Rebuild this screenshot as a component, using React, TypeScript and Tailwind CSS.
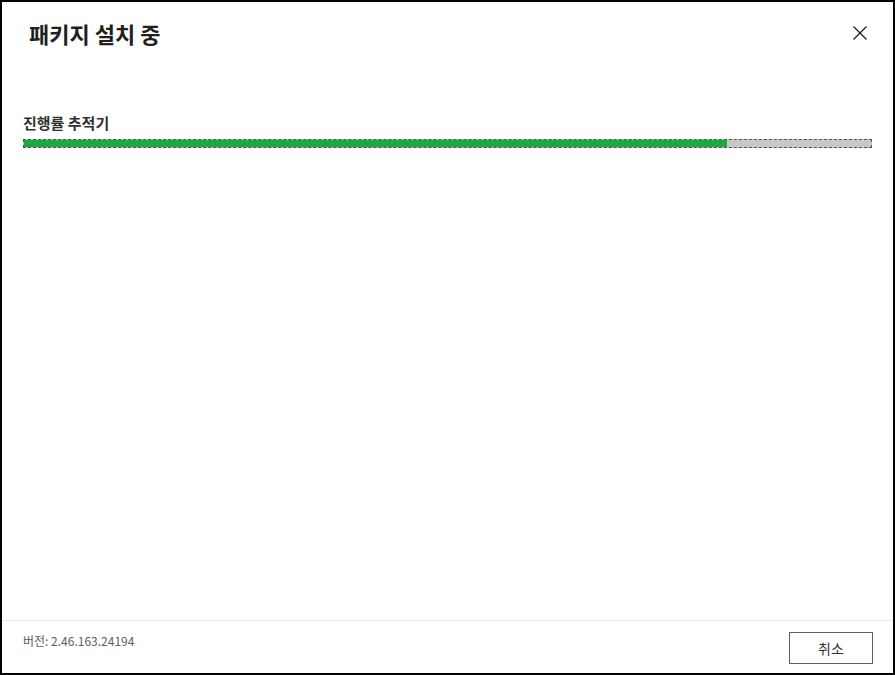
const font = { fontFamily: '"Noto Sans CJK KR", "Noto Sans", sans-serif' };

function CloseIcon() {
  return (
    <svg width="14" height="14" viewBox="0 0 14 14" fill="none">
      <path d="M0.5 0.5l13 13M13.5 0.5l-13 13" stroke="currentColor" strokeWidth="1.3" />
    </svg>
  );
}

export default function App() {
  const progress = 83;

  return (
    <div
      className="flex h-[675px] w-[895px] flex-col border-2 border-black bg-white text-[#201f1e]"
      style={font}
    >
      {/* Header */}
      <div className="flex items-center justify-between pl-[27px] pr-[17px] pt-[15px]">
        <h1 className="text-[22px] font-bold leading-[30px]">패키지 설치 중</h1>
        <button className="flex h-8 w-8 items-center justify-center text-[#201f1e]">
          <CloseIcon />
        </button>
      </div>

      {/* Progress */}
      <div className="flex-1 px-[21px] pt-[64px]">
        <p className="text-[15px] font-bold leading-[20px] text-[#323130]">진행률 추적기</p>
        <div className="mt-[6px] flex h-[9px] w-full overflow-hidden border border-dashed border-[#555] bg-[#c8c8c8]">
          <div className="h-full bg-[#1aab40]" style={{ width: `${progress}%` }} />
        </div>
      </div>

      {/* Footer */}
      <div className="flex items-start justify-between border-t border-[#ebebeb] pb-[9px] pl-[21px] pr-[20px] pt-[11px]">
        <span className="text-[12px] leading-[18px] text-[#605e5c]">버전: 2.46.163.24194</span>
        <button className="flex h-[32px] w-[84px] items-center justify-center border border-[#5f5f5f] text-[14px] text-[#323130]">
          취소
        </button>
      </div>
    </div>
  );
}
